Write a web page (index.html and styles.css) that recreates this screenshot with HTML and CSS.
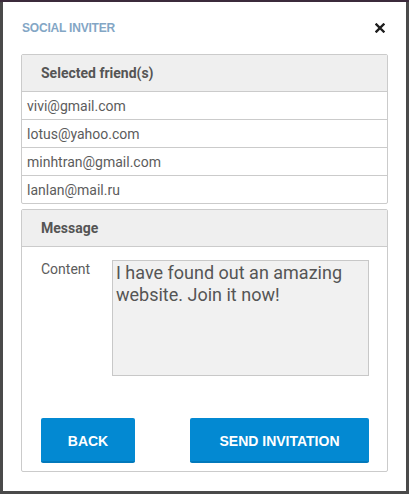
FILE: index.html
```html
<!DOCTYPE html>
<html>
<head>
<meta charset="utf-8">
<link rel="stylesheet" href="styles.css">
</head>
<body>
<div class="modal">
  <div class="modal-header">
    <span class="title">SOCIAL INVITER</span>
    <button class="close" aria-label="Close">
      <svg width="10" height="10" viewBox="0 0 10 10"><path d="M1.5 1.5 L8.5 8.5 M8.5 1.5 L1.5 8.5" stroke="#1e1e1e" stroke-width="2.4" stroke-linecap="square"/></svg>
    </button>
  </div>
  <div class="panel">
    <div class="panel-head">Selected friend(s)</div>
    <div class="row">vivi@gmail.com</div>
    <div class="row">lotus@yahoo.com</div>
    <div class="row">minhtran@gmail.com</div>
    <div class="row">lanlan@mail.ru</div>
  </div>
  <div class="panel panel-msg">
    <div class="panel-head">Message</div>
    <div class="msg-body">
      <div class="field">
        <span class="label">Content</span>
        <div class="textarea">I have found out an amazing website. Join it now!</div>
      </div>
      <div class="actions">
        <button class="btn btn-back">BACK</button>
        <button class="btn btn-send">SEND INVITATION</button>
      </div>
    </div>
  </div>
</div>
</body>
</html>
```

FILE: styles.css
```css
html, body {
  margin: 0;
  padding: 0;
}
body {
  background: #4a4a4a;
  border-top: 2px solid #3b2a3b;
  height: 492px;
  overflow: hidden;
}
.modal {
  background: #fff;
  margin: 0 3px 0 3px;
  height: 489px;
  box-sizing: border-box;
  padding: 0 18px;
  font-family: Roboto, "Liberation Sans", sans-serif;
  color: #555;
}
.modal-header {
  height: 52px;
  display: flex;
  align-items: center;
  justify-content: space-between;
  padding-right: 3px;
}
.title {
  font-family: "Liberation Sans", Arial, sans-serif;
  font-weight: bold;
  font-size: 12px;
  letter-spacing: -0.2px;
  color: #83a6c5;
  padding-left: 1px;
}
.close {
  background: none;
  border: 0;
  padding: 0;
  width: 10px;
  height: 10px;
  display: flex;
}
.panel {
  border: 1px solid #cbcbcb;
  border-radius: 2px;
}
.panel-head {
  height: 36px;
  background: #efefef;
  border-bottom: 1px solid #cbcbcb;
  display: flex;
  align-items: center;
  padding-left: 19px;
  font-weight: bold;
  font-size: 14px;
  color: #555;
}
.row {
  height: 27px;
  display: flex;
  align-items: center;
  padding-left: 5px;
  font-size: 14px;
  color: #5c5c5c;
  border-bottom: 1px solid #cbcbcb;
}
.row:last-child {
  border-bottom: 0;
}
.panel-msg {
  margin-top: 5px;
}
.msg-body {
  padding: 13px 18px 8px 19px;
}
.field {
  display: flex;
  gap: 22px;
}
.label {
  width: 49px;
  font-size: 14px;
  color: #5c5c5c;
  padding-top: 1px;
}
.textarea {
  width: 257px;
  height: 116px;
  box-sizing: border-box;
  background: #f1f1f1;
  border: 1px solid #c8c8c8;
  padding: 1px 3px;
  font-size: 18px;
  line-height: 22px;
  color: #555;
}
.actions {
  margin-top: 42px;
  display: flex;
  justify-content: space-between;
}
.btn {
  height: 45px;
  border: 0;
  border-radius: 2px;
  background: #0389d2;
  border-bottom: 2px solid #0279bb;
  color: #fff;
  font-family: "Liberation Sans", Arial, sans-serif;
  font-weight: bold;
  font-size: 14px;
  padding: 2px 0 0 0;
}
.btn-back {
  width: 94px;
}
.btn-send {
  width: 179px;
}
```
